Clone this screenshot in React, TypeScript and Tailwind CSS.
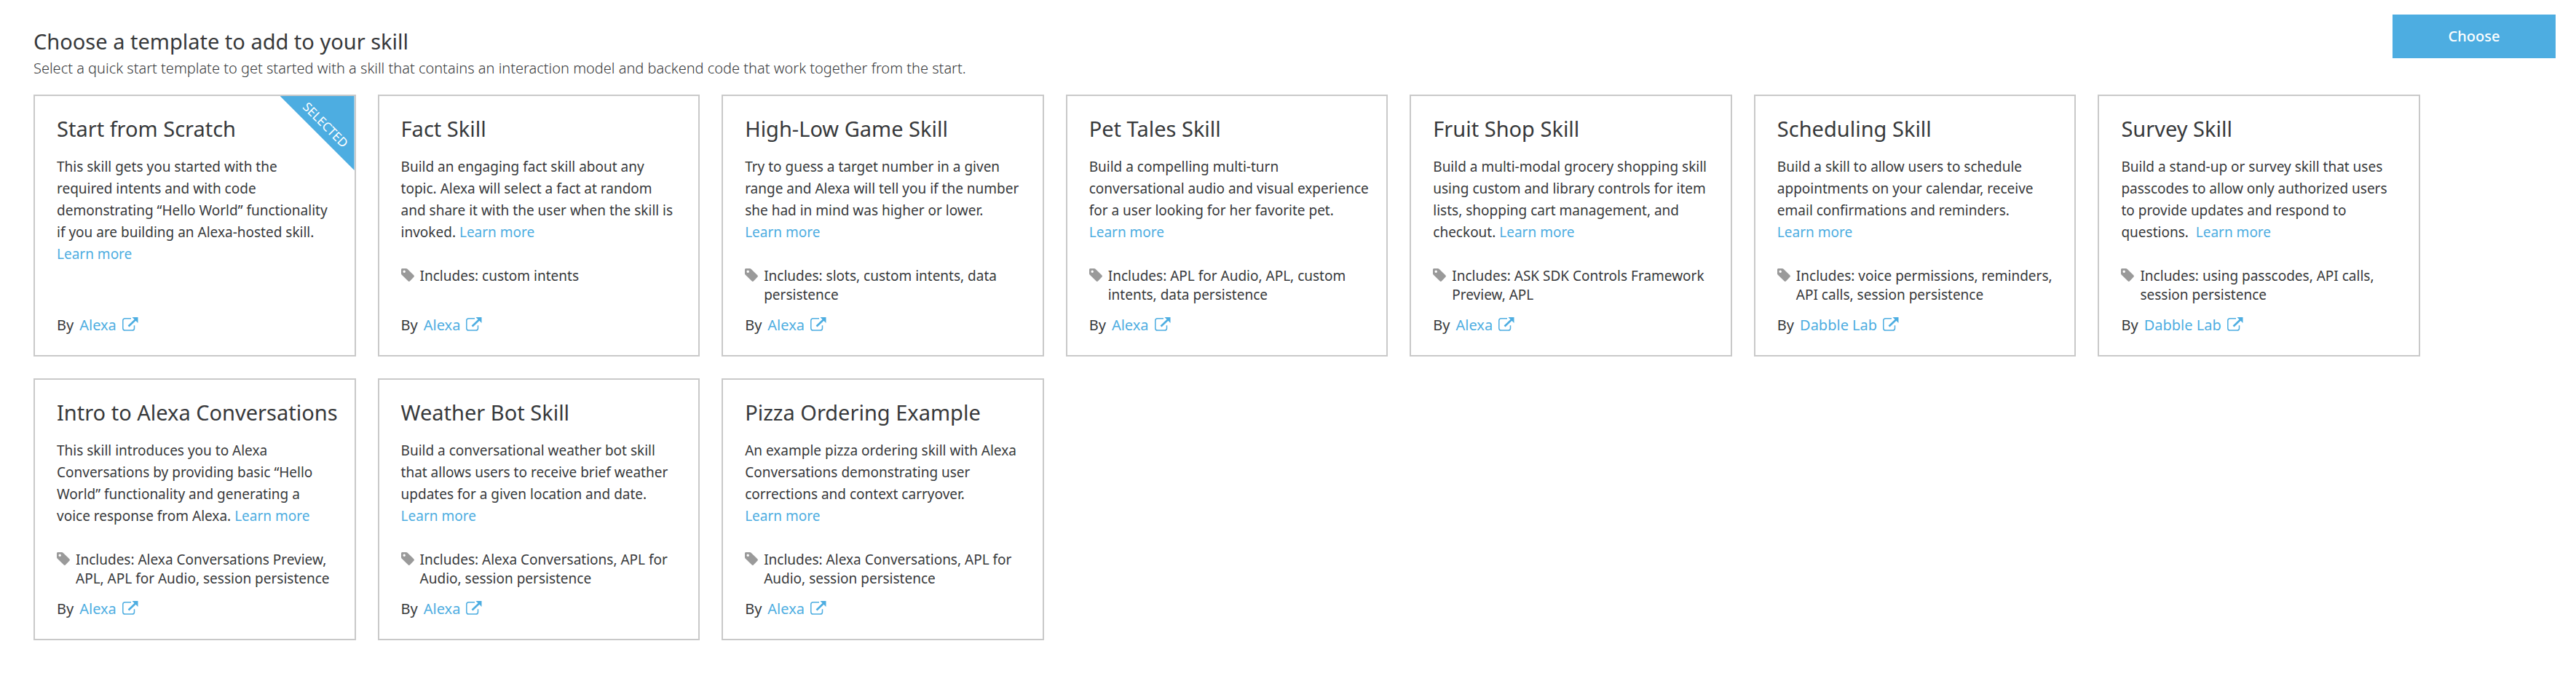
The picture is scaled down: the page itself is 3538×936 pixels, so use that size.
type Template = {
  title: string;
  description: string[];
  includes?: string[];
  author: string;
  selected?: boolean;
};

// an empty last line puts the "Learn more" link on its own row
const templates: Template[] = [
  {
    title: "Start from Scratch",
    description: [
      "This skill gets you started with the",
      "required intents and with code",
      "demonstrating “Hello World” functionality",
      "if you are building an Alexa-hosted skill.",
      "",
    ],
    author: "Alexa",
    selected: true,
  },
  {
    title: "Fact Skill",
    description: [
      "Build an engaging fact skill about any",
      "topic. Alexa will select a fact at random",
      "and share it with the user when the skill is",
      "invoked. ",
    ],
    includes: ["Includes: custom intents"],
    author: "Alexa",
  },
  {
    title: "High-Low Game Skill",
    description: [
      "Try to guess a target number in a given",
      "range and Alexa will tell you if the number",
      "she had in mind was higher or lower.",
      "",
    ],
    includes: ["Includes: slots, custom intents, data", "persistence"],
    author: "Alexa",
  },
  {
    title: "Pet Tales Skill",
    description: [
      "Build a compelling multi-turn",
      "conversational audio and visual experience",
      "for a user looking for her favorite pet.",
      "",
    ],
    includes: ["Includes: APL for Audio, APL, custom", "intents, data persistence"],
    author: "Alexa",
  },
  {
    title: "Fruit Shop Skill",
    description: [
      "Build a multi-modal grocery shopping skill",
      "using custom and library controls for item",
      "lists, shopping cart management, and",
      "checkout. ",
    ],
    includes: ["Includes: ASK SDK Controls Framework", "Preview, APL"],
    author: "Alexa",
  },
  {
    title: "Scheduling Skill",
    description: [
      "Build a skill to allow users to schedule",
      "appointments on your calendar, receive",
      "email confirmations and reminders.",
      "",
    ],
    includes: ["Includes: voice permissions, reminders,", "API calls, session persistence"],
    author: "Dabble Lab",
  },
  {
    title: "Survey Skill",
    description: [
      "Build a stand-up or survey skill that uses",
      "passcodes to allow only authorized users",
      "to provide updates and respond to",
      "questions.\u00a0 ",
    ],
    includes: ["Includes: using passcodes, API calls,", "session persistence"],
    author: "Dabble Lab",
  },
  {
    title: "Intro to Alexa Conversations",
    description: [
      "This skill introduces you to Alexa",
      "Conversations by providing basic “Hello",
      "World” functionality and generating a",
      "voice response from Alexa. ",
    ],
    includes: ["Includes: Alexa Conversations Preview,", "APL, APL for Audio, session persistence"],
    author: "Alexa",
  },
  {
    title: "Weather Bot Skill",
    description: [
      "Build a conversational weather bot skill",
      "that allows users to receive brief weather",
      "updates for a given location and date.",
      "",
    ],
    includes: ["Includes: Alexa Conversations, APL for", "Audio, session persistence"],
    author: "Alexa",
  },
  {
    title: "Pizza Ordering Example",
    description: [
      "An example pizza ordering skill with Alexa",
      "Conversations demonstrating user",
      "corrections and context carryover.",
      "",
    ],
    includes: ["Includes: Alexa Conversations, APL for", "Audio, session persistence"],
    author: "Alexa",
  },
];

function TagIcon() {
  return (
    <svg viewBox="0 0 18 18" className="mt-[3px] h-[18px] w-[18px] shrink-0" aria-hidden="true">
      <path
        fill="#9a9a9a"
        fillRule="evenodd"
        d="M1.6 0h5.2c.7 0 1.3.3 1.8.7l8.7 8.5c.8.8.8 1.8 0 2.6l-5.2 5.5c-.7.8-1.9.8-2.6 0L.8 8.8C.3 8.3 0 7.700 0 7V1.600C0 .7.7 0 1.600 0zm2.600 2.500a1.700 1.700 0 1 0 0 3.400 1.700 1.700 0 0 0 0-3.400z"
      />
    </svg>
  );
}

function ExternalIcon() {
  return (
    <svg viewBox="0 0 22 19" className="mb-1 h-[19px] w-[22px] shrink-0" fill="none" aria-hidden="true">
      <path
        d="M12 1.700H3.800C2 1.700.8 2.800.8 4.500v10.700c0 1.700 1.200 2.900 3 2.900h9.700c1.800 0 3-1.200 3-2.900v-4"
        stroke="#4dade1"
        strokeWidth="1.500"
      />
      <path d="M8.500 12.500 18.500 3" stroke="#4dade1" strokeWidth="2.600" />
      <path d="M13.500 0H21.500v8z" fill="#4dade1" />
    </svg>
  );
}

function TemplateCard({ template }: { template: Template }) {
  const { title, description, includes, author, selected } = template;
  return (
    <article className="relative flex flex-col border-2 border-[#c9c9c9] bg-white pt-[25px] pr-3 pb-[26px] pl-[30px]">
      {selected && (
        <div className="absolute top-0 right-0 flex h-[102px] w-[102px] items-center justify-center bg-[#4dade1] [clip-path:polygon(0_0,100%_0,100%_100%)]">
          <span className="rotate-45 pb-8 text-[17px] leading-6 text-white">SELECTED</span>
        </div>
      )}
      <h2 className="text-[29px] leading-10">{title}</h2>
      <p className="mt-[17px] min-h-[152px] text-[19px] leading-[30px]">
        {description.map((line, i) => (
          <span key={i} className="block">
            {line}
            {i === description.length - 1 && <a href="#" className="text-[#4dade1]">Learn more</a>}
          </span>
        ))}
      </p>
      <div className="flex min-h-[52px] gap-2 text-[19px] leading-[26px]">
        {includes && (
          <>
            <TagIcon />
            <p>
              {includes.map((line) => (
                <span key={line} className="block">{line}</span>
              ))}
            </p>
          </>
        )}
      </div>
      <div className="mt-[14px] flex items-center gap-2 text-[20px] leading-[30px]">
        <span>By</span>
        <a href="#" className="flex items-center gap-2 text-[#4dade1]">
          {author}
          <ExternalIcon />
        </a>
      </div>
    </article>
  );
}

export default function App() {
  return (
    <main className="min-h-screen bg-white pb-14 font-['Noto_Sans',sans-serif] text-[#37393b]">
      <header className="flex items-start justify-between pt-5 pr-7 pl-[46px]">
        <div className="pt-[17px]">
          <h1 className="text-[29px] leading-10">Choose a template to add to your skill</h1>
          <p className="mt-[2px] text-[20px] leading-[30px] font-light">
            Select a quick start template to get started with a skill that contains an interaction model and backend code
            that work together from the start.
          </p>
        </div>
        <button type="button" className="h-[60px] w-[224px] shrink-0 bg-[#4dade1] text-[20px] font-medium text-white">
          Choose
        </button>
      </header>
      <section className="mt-[21px] grid grid-cols-[repeat(auto-fill,minmax(440px,1fr))] gap-[30px] pr-[214px] pl-[46px]">
        {templates.map((template) => (
          <TemplateCard key={template.title} template={template} />
        ))}
      </section>
    </main>
  );
}
